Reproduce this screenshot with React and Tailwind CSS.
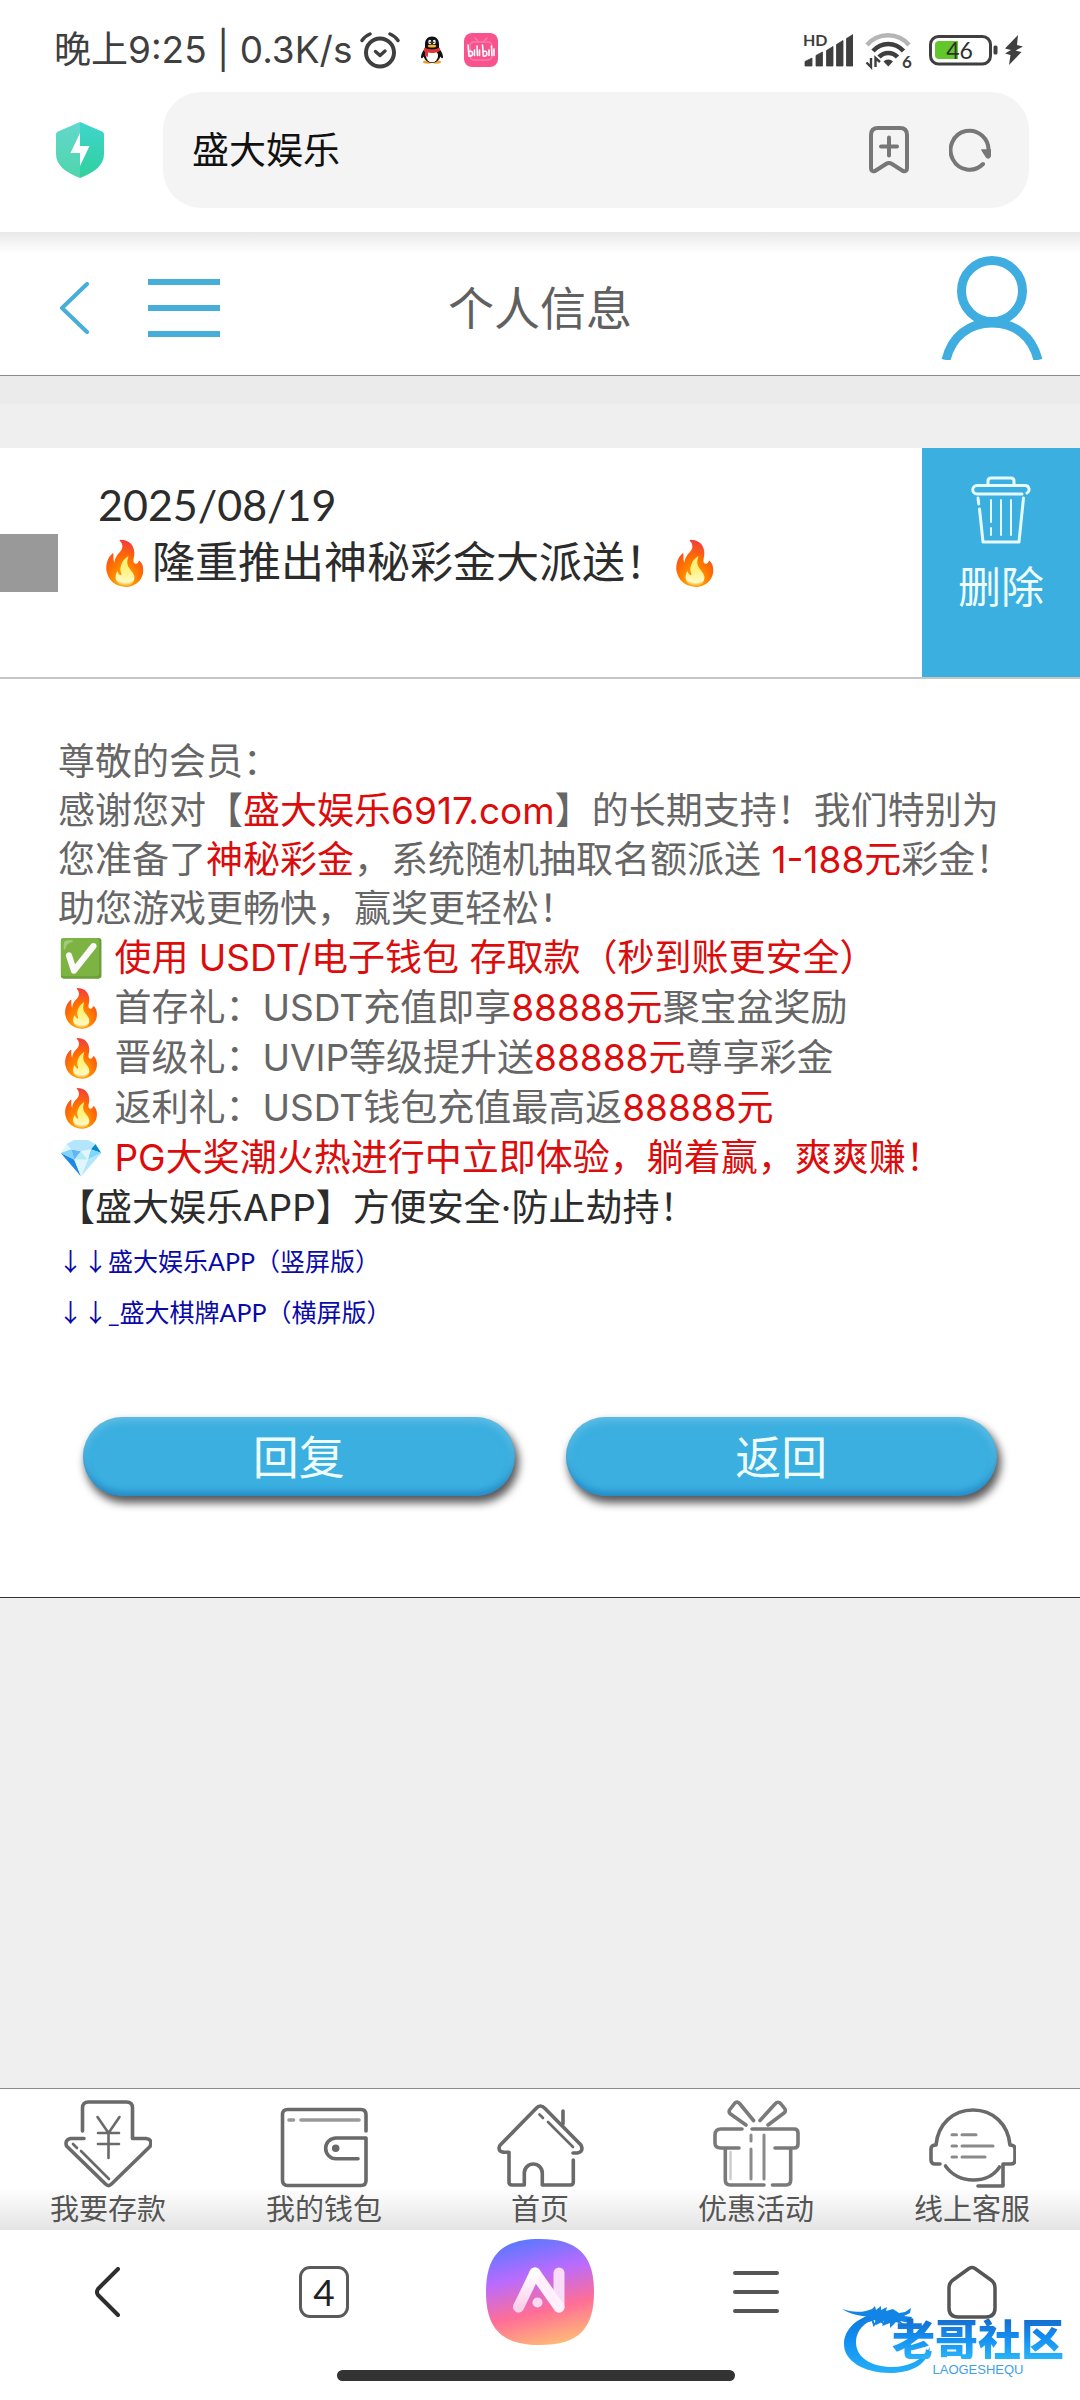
import React from "react";

const LATO = "font-['Lato','Noto_Sans_CJK_SC',sans-serif]";
const INTER = "font-['Inter','Noto_Sans_CJK_SC',sans-serif]";

function Red({ children }) {
  return <span className="text-[#dc0c0c]">{children}</span>;
}

function AlarmIcon() {
  return (
    <svg width="40" height="38" viewBox="0 0 40 38" fill="none" stroke="#3f3f3f" strokeLinecap="round" strokeLinejoin="round">
      <circle cx="20" cy="21.5" r="14" strokeWidth="4" />
      <path d="M15.5 20.5l4.5 4 5-4.5" strokeWidth="3.4" />
      <path d="M2 9.5c2-3 5-5.300 8-6.500M38 9.500c-2-3-5-5.300-8-6.500" strokeWidth="3.4" />
    </svg>
  );
}

function PenguinIcon() {
  return (
    <svg width="24" height="28" viewBox="0 0 24 28">
      <ellipse cx="7.500" cy="26" rx="4.500" ry="1.700" fill="#f0a030" />
      <ellipse cx="16.500" cy="26" rx="4.500" ry="1.700" fill="#f0a030" />
      <path d="M12 0.500c4.500 0 7 3.200 7 7.500v4c2 2.800 4 6 4 9 0 2-1.500 1.500-2.700-.500C19.500 24 16 27 12 27s-7.500-3-8.300-6.500C2.500 22.500 1 23 1 21c0-3 2-6.200 4-9V8c0-4.300 2.500-7.500 7-7.500z" fill="#111" />
      <ellipse cx="12" cy="20" rx="6" ry="6.300" fill="#fff" />
      <path d="M4.500 11.500c4 2.500 11 2.500 15 0l.8 3.200c-4 2.400-9 2.600-12.300 1.900v4.200l-3-.5v-4.500l-1.300-.9z" fill="#e03535" />
      <ellipse cx="9.800" cy="6" rx="1.500" ry="2.200" fill="#fff" />
      <ellipse cx="14.200" cy="6" rx="1.500" ry="2.200" fill="#fff" />
      <circle cx="10.200" cy="6.200" r="0.800" fill="#111" />
      <circle cx="13.800" cy="6.200" r="0.800" fill="#111" />
      <ellipse cx="12" cy="10" rx="4.200" ry="1.500" fill="#f2b233" />
    </svg>
  );
}

function BiliIcon() {
  return (
    <svg width="34" height="34" viewBox="0 0 34 34" fill="none" strokeLinecap="round">
      <rect width="34" height="34" rx="8" fill="#f9538d" />
      <rect x="6" y="9" width="22" height="18" rx="4" stroke="#fb7ba8" strokeWidth="1.500" />
      <path d="M11 5l4 4M23 5l-4 4" stroke="#fb7ba8" strokeWidth="1.500" />
      <g stroke="#fff" strokeWidth="1.600">
        <path d="M4 12l1 11c3 .5 4-1 3.500-3s-2-2-3.500-1.500M10.500 17v5.500M13 13l.5 9.500M15.500 17v5.500" />
        <path d="M18.500 12l.8 11c3 .5 4-1 3.500-3s-2-2-3.500-1.500M25 17v5.500M27.500 13l.4 9.500M30 16v6.500" />
      </g>
    </svg>
  );
}

function SignalIcon() {
  return (
    <svg width="50" height="42" viewBox="0 -4 50 42" fill="#3f3f3f">
      <text x="0" y="13" fontSize="16" fontWeight="700" fontFamily="Lato, sans-serif">HD</text>
      <path d="M2 28.500l7-3.500v8H2zM13 22.500l6.500-3.500v14H13zM23.500 17.500l6.500-4v19.500h-6.500zM33.500 11.500l6.500-4V33h-6.500zM43.500 5.500l6.500-4V33h-6.500z" stroke="#3f3f3f" strokeWidth="0.800" strokeLinejoin="round" />
    </svg>
  );
}

function WifiIcon() {
  return (
    <svg width="48" height="46" viewBox="0 -4 48 46" fill="none">
      <path d="M2 14C13 1 33 1 44 14" stroke="#b5b5b5" strokeWidth="4.500" />
      <path d="M8 20C16.500 10.500 30 10.500 38.500 20" stroke="#3f3f3f" strokeWidth="4.500" />
      <path d="M14 26C19 20.500 27.500 20.500 32.500 26" stroke="#3f3f3f" strokeWidth="4.500" />
      <path d="M18.500 30.500a6.500 6.500 0 0 1 9.500 0l-4.700 5z" fill="#3f3f3f" />
      <path d="M6 27v9l-4.500-4.500M10.500 36v-9l4.500 4" stroke="#3f3f3f" strokeWidth="2.400" />
      <text x="37" y="37" fontSize="17" fontWeight="700" fontFamily="Lato, sans-serif" fill="#3f3f3f">6</text>
    </svg>
  );
}

function BatteryIcon() {
  return (
    <svg width="94" height="32" viewBox="0 0 94 32">
      <rect x="1.500" y="2.500" width="60" height="27.500" rx="8" fill="none" stroke="#3f3f3f" strokeWidth="3" />
      <path d="M10 7h19v18H10a4 4 0 0 1-4-4V11a4 4 0 0 1 4-4z" fill="#62c72b" />
      <rect x="64.500" y="11.500" width="4" height="9" rx="1.500" fill="#3f3f3f" />
      <text x="30.500" y="24.500" fontSize="23" textAnchor="middle" fontFamily="Lato, sans-serif" fill="#2f2f2f">46</text>
      <path d="M89 1L76 14.500l6 1.500-6 3.500 5.500 1.500-1.500 10L92.500 18l-6-1.500 7.500-4-6-1.500z" fill="#3f3f3f" />
    </svg>
  );
}

function ShieldIcon() {
  return (
    <svg width="48" height="58" viewBox="0 0 48 58">
      <defs>
        <linearGradient id="shieldL" x1="0" y1="0" x2="0" y2="1">
          <stop offset="0" stopColor="#62d8cd" />
          <stop offset="1" stopColor="#4fd5ab" />
        </linearGradient>
        <linearGradient id="shieldR" x1="0" y1="0" x2="0" y2="1">
          <stop offset="0" stopColor="#40d5cd" />
          <stop offset="1" stopColor="#2fd09d" />
        </linearGradient>
      </defs>
      <path d="M24 1L2 10.500a3 3 0 0 0-2 2.500v20c0 11 9 18 24 24z" fill="url(#shieldL)" />
      <path d="M24 1l22 9.500a3 3 0 0 1 2 2.500v20c0 11-9 18-24 24z" fill="url(#shieldR)" />
      <path d="M24 12L14.500 32H24v13l9.500-20H24z" fill="#fff" />
    </svg>
  );
}

function BookmarkAddIcon() {
  return (
    <svg width="40" height="48" viewBox="0 0 40 48" fill="none" stroke="#777" strokeWidth="4" strokeLinecap="round" strokeLinejoin="round">
      <path d="M2 42V9q0-7 7-7h22q7 0 7 7v33q0 4-4 3l-11-7q-3-2-6 0L6 45q-4 1-4-3z" />
      <path d="M20 11.500v18M12 20.500h16" />
    </svg>
  );
}

function ReloadIcon() {
  return (
    <svg width="42" height="44" viewBox="0 0 42 44" fill="none">
      <path d="M34 36A19 19.500 0 1 1 39.500 24" stroke="#777" strokeWidth="4" strokeLinecap="round" />
      <path d="M33 22h8.500v5.500q-1.500 4-4 1.500z" fill="#777" stroke="#777" strokeWidth="1.500" strokeLinejoin="round" />
    </svg>
  );
}

function PersonIcon() {
  return (
    <svg width="102" height="104" viewBox="0 0 102 104" fill="none" stroke="#3faddf" strokeWidth="9">
      <ellipse cx="52" cy="35" rx="30.500" ry="30.500" />
      <path d="M6 104C12 80 29 67 52 67s40 13 46 37" />
    </svg>
  );
}

function TrashIcon() {
  return (
    <svg width="60" height="68" viewBox="0 0 60 68" fill="none" stroke="#e6faff" strokeWidth="3" strokeLinecap="round" strokeLinejoin="round">
      <path d="M17 9V5q0-3 3-3h20q3 0 3 3v4" />
      <path d="M51 18H6a4 4 0 0 1 0-8.500h48a4 4 0 0 1 2 7.500" />
      <path d="M7 22l.7 6M8.500 33L12 66h36l4.500-44" />
      <path d="M20 24v22M20 52v7M30 24v35M40 24v35" strokeWidth="2" />
    </svg>
  );
}

function NavSvg({ children }) {
  return (
    <svg width="88" height="88" viewBox="0 0 88 88" fill="none" stroke="#6a6a6a" strokeWidth="3.600" strokeLinecap="round" strokeLinejoin="round">
      {children}
    </svg>
  );
}

function DepositIcon() {
  return (
    <NavSvg>
      <path d="M18.500 31V8q0-6 6-6h38q6 0 6 6v30.500H82q7 1 4 8L47.500 84q-3 3-6 0L2.500 46q-2-6 4-7.500h13.500" />
      <path d="M33.500 17l11 16 11-16M44.500 33v25M34 33h21M34 44h21" strokeWidth="2.600" />
      <path d="M9 44l4 4M17 51l28 28" strokeWidth="2.600" />
    </NavSvg>
  );
}

function WalletIcon() {
  return (
    <NavSvg>
      <path d="M86 31V15q0-5.500-5-5.500H7.500q-5 0-5 5V80q0 5.500 5 5.500H81q5 0 5-5V38H56a10.300 10.300 0 0 0 0 20.700h22" />
      <circle cx="55.700" cy="48.300" r="2" fill="#6a6a6a" />
      <path d="M9 20h4.500M21 20h58" stroke="#999" />
    </NavSvg>
  );
}

function HouseIcon() {
  return (
    <NavSvg>
      <path d="M77.300 60v22q0 3-3 3h-28V73a9 9 0 0 0-18 0v12H16q-3 0-3-3V52.300H8q-7-1-4-7L40 8.500q4.300-5 9 0L85 45q3 7-4 8h-4" />
      <path d="M67 11v13" />
      <path d="M43.500 14.500l3.500 3.500M52 22l25 25" strokeWidth="2.600" />
    </NavSvg>
  );
}

function GiftIcon() {
  return (
    <NavSvg>
      <g stroke="#7a7a7a">
        <path d="M30 29H9q-6 0-6 6v8q0 5 6 5h18M40 29h42q4 0 4 4v11q0 4-4 4H63" />
        <path d="M13.300 49v31q0 5 5 5H52M60.500 85H74q4.700 0 4.700-5V49" />
        <path d="M41.500 20.500L28 4q-3-3.500-5.500-.500L17.500 10q-1 2.500 1 4L34 25M48 20.500L63 4q3-3.500 6 0l4 5q1 2.500-1 4L56 25" />
      </g>
      <path d="M39 35v6M39 49v30M52 35v44" stroke="#8a8a8a" strokeWidth="3" />
      <path d="M18.500 52v27" stroke="#ccc" strokeWidth="2.500" />
    </NavSvg>
  );
}

function ServiceIcon() {
  return (
    <NavSvg>
      <path d="M12 64H7q-4 0-4-4V49q0-4 5-4C10 24 25 10 45 10s35 14 37 35q5 0 5 4v11q0 4-4 4h-8v22H50" />
      <path d="M17.500 66C30 84 60 85 71.500 67" />
      <path d="M24 34.700h4.500M34 34.700h14M24 46h4.500M34 46h31M24 57h4.500M34 57h23" stroke="#8a8a8a" strokeWidth="3" />
    </NavSvg>
  );
}

function AiIcon() {
  return (
    <svg width="108" height="106" viewBox="0 0 108 106">
      <defs>
        <linearGradient id="aiBg" x1="0.350" y1="0" x2="0.600" y2="1">
          <stop offset="0" stopColor="#5b78ff" />
          <stop offset="0.330" stopColor="#b86bff" />
          <stop offset="0.680" stopColor="#ff6e96" />
          <stop offset="1" stopColor="#ffb878" />
        </linearGradient>
        <linearGradient id="aiLeg" x1="0" y1="0" x2="0" y2="1">
          <stop offset="0" stopColor="#fff" />
          <stop offset="1" stopColor="#fbd0ea" />
        </linearGradient>
      </defs>
      <path d="M54 0C92 0 108 16 108 53S92 106 54 106 0 90 0 53 16 0 54 0z" fill="url(#aiBg)" />
      <g fill="none" strokeWidth="11" strokeLinecap="round" strokeLinejoin="round">
        <path d="M73 34v34" stroke="#f8dcf8" />
        <path d="M49 34L73 68" stroke="#fff0fb" />
        <path d="M32.500 68L49 34" stroke="url(#aiLeg)" />
      </g>
      <circle cx="51.500" cy="63.500" r="5" fill="#fbd9f0" />
    </svg>
  );
}

function DragonLogo() {
  return (
    <svg width="90" height="72" viewBox="0 0 90 72">
      <defs>
        <linearGradient id="dragon" x1="0" y1="0" x2="0" y2="1">
          <stop offset="0" stopColor="#1178d8" />
          <stop offset="0.400" stopColor="#0f8cf0" />
          <stop offset="1" stopColor="#25b0f8" />
        </linearGradient>
      </defs>
      <path d="M32 10C14 14 2 26 2 40c0 17 20 29 46 29 22 0 38-9 40-26-8 14-22 20-38 20C30 63 14 54 14 38c0-11 8-20 22-25z" fill="url(#dragon)" />
      <path d="M0 5c7 2 14 4 24 2l6-2 3-3 1 4 5-4 0 4 6-3-1 4 7-2 6 4 6-1 6-4-1 5-6 3 8 1-2 6-10-2 4 4-8-3-6 6 0-5-8 3 2-5-8 4-1-5-6 2 1-5C17 12 8 10 0 5z" fill="#1284e6" />
      <path d="M26 12l-4 7 8-4 2 6 5-6 5 5 4-6" fill="none" stroke="#1284e6" strokeWidth="2" />
    </svg>
  );
}

function BrandMark() {
  return (
    <div className="pointer-events-none absolute right-4 bottom-6 flex items-end">
      <DragonLogo />
      <div className="-ml-10 flex flex-col items-center">
        <span className="bg-linear-to-b from-[#1668c8] via-[#148ef0] to-[#2ab4f8] bg-clip-text font-['Noto_Sans_CJK_SC',sans-serif] text-[43px] leading-[43px] font-black text-transparent">
          老哥社区
        </span>
        <span className="mt-1 font-['Liberation_Sans',sans-serif] text-[13px] leading-[13px] text-[#3f9fe8]">LAOGESHEQU</span>
      </div>
    </div>
  );
}

const navItems = [
  { label: "我要存款", Icon: DepositIcon },
  { label: "我的钱包", Icon: WalletIcon },
  { label: "首页", Icon: HouseIcon },
  { label: "优惠活动", Icon: GiftIcon },
  { label: "线上客服", Icon: ServiceIcon },
];

function PillButton({ children }) {
  return (
    <button
      type="button"
      className="h-[79px] flex-1 rounded-full bg-[#3aafe0] text-[46px] leading-[60px] text-[#f0fdff] shadow-[3px_6px_9px_1px_rgba(0,0,0,0.65),inset_0_-6px_6px_-2px_rgba(20,110,180,0.6),inset_0_4px_8px_rgba(140,205,235,0.5)]"
    >
      {children}
    </button>
  );
}

export default function App() {
  return (
    <div className={`flex min-h-screen w-full flex-col bg-[#efefef] ${LATO}`}>
      <div className="bg-white">
        <div className="flex h-[92px] items-center justify-between pt-2 pr-[57px] pl-[54px]">
          <div className="flex items-center">
            <span className={`${INTER} text-[37px] leading-[44px] text-[#3f3f3f]`}>
              晚上9:25 | 0.3K/s
            </span>
            <span className="ml-2 flex items-center gap-5">
              <AlarmIcon />
              <PenguinIcon />
              <BiliIcon />
            </span>
          </div>
          <div className="flex items-center">
            <SignalIcon />
            <span className="mr-4 ml-3"><WifiIcon /></span>
            <BatteryIcon />
          </div>
        </div>
        <div className="flex items-center pr-[51px] pb-6 pl-[56px]">
          <button type="button" aria-label="安全"><ShieldIcon /></button>
          <div className="ml-[59px] flex h-[116px] flex-1 items-center rounded-[38px] bg-[#f4f4f4] pr-[38px] pl-[29px]">
            <input
              type="text"
              aria-label="地址栏"
              defaultValue="盛大娱乐"
              className="min-w-0 flex-1 bg-transparent text-[37px] leading-[50px] text-[#111] outline-none"
            />
            <div className="flex items-center gap-10">
              <button type="button" aria-label="收藏"><BookmarkAddIcon /></button>
              <button type="button" aria-label="刷新"><ReloadIcon /></button>
            </div>
          </div>
        </div>
      </div>

      <header className="grid h-[144px] grid-cols-3 items-center border-b border-[#8a8a8a] bg-linear-to-b from-[#e9e9e9] to-white to-15% px-[38px] pt-2">
        <div className="flex items-center gap-[58px] pl-5">
          <button type="button" aria-label="返回上页">
            <svg width="32" height="52" viewBox="0 0 32 52" fill="none" stroke="#47add9" strokeWidth="4" strokeLinecap="round" strokeLinejoin="round">
              <path d="M29 2L4 26l25 24" />
            </svg>
          </button>
          <button type="button" aria-label="菜单">
            <svg width="72" height="60" viewBox="0 0 72 60" fill="#47add9">
              <path d="M0 1h72v6H0zM0 27h72v6H0zM0 53h72v6H0z" />
            </svg>
          </button>
        </div>
        <h1 className="text-center text-[46px] leading-[60px] text-[#606060]">个人信息</h1>
        <button type="button" aria-label="个人中心" className="justify-self-end"><PersonIcon /></button>
      </header>

      <div className="h-7 bg-[#ebebeb]" />
      <div className="h-11 bg-[#efefef]" />

      <section className="flex h-[231px] border-b-2 border-[#c6c6c6] bg-white">
        <input type="checkbox" aria-label="选择消息" className="mt-[86px] h-[58px] w-[58px] appearance-none bg-[#999]" />
        <div className="ml-10 flex-1 pt-7 text-[43px] leading-[57px] text-[#2c2c2c]">
          <p>2025/08/19</p>
          <p>🔥隆重推出神秘彩金大派送！🔥</p>
        </div>
        <button type="button" className="flex w-[158px] flex-col items-center bg-[#3aafe0] pt-7 text-[43px] leading-[57px] text-[#f0fdff]">
          <TrashIcon />
          <span className="mt-3.5">删除</span>
        </button>
      </section>

      <section className="border-b border-[#333] bg-white pt-[58px] pb-[101px]">
        <div className={`${INTER} px-[58px] text-[37px] whitespace-nowrap text-[#666]`}>
          <div className="leading-[49px]">
            <p>尊敬的会员：</p>
            <p>感谢您对【<Red>盛大娱乐6917.com</Red>】的长期支持！我们特别为</p>
            <p>您准备了<Red>神秘彩金</Red>，系统随机抽取名额派送 <Red>1-188元</Red>彩金！</p>
            <p>助您游戏更畅快，赢奖更轻松！</p>
          </div>
          <div className="leading-[50px]">
            <p>✅ <Red>使用 USDT/电子钱包 存取款（秒到账更安全）</Red></p>
            <p>🔥 首存礼：USDT充值即享<Red>88888元</Red>聚宝盆奖励</p>
            <p>🔥 晋级礼：UVIP等级提升送<Red>88888元</Red>尊享彩金</p>
            <p>🔥 返利礼：USDT钱包充值最高返<Red>88888元</Red></p>
            <p>💎 <Red>PG大奖潮火热进行中立即体验，躺着赢，爽爽赚！</Red></p>
            <p className="text-[#2c2c2c]">【盛大娱乐APP】方便安全·防止劫持！</p>
          </div>
          <div className={`${LATO} flex flex-col items-start pt-0.5 text-[25px] leading-[50px] text-[#0a0aa8]`}>
            <a href="#portrait"><span className="font-['Noto_Sans_CJK_SC',sans-serif]">↓↓</span>盛大娱乐APP（竖屏版）</a>
            <a href="#landscape"><span className="font-['Noto_Sans_CJK_SC',sans-serif]">↓↓</span>_盛大棋牌APP（横屏版）</a>
          </div>
        </div>
        <div className="mt-20 flex gap-[51px] px-[83px]">
          <PillButton>回复</PillButton>
          <PillButton>返回</PillButton>
        </div>
      </section>

      <main className="flex-1" />

      <nav className="grid grid-cols-5 border-t border-[#8a8a8a] bg-linear-to-b from-white from-70% to-[#e4e4e4] pt-[11px]">
        {navItems.map(({ label, Icon }) => (
          <a key={label} href="#nav" className="flex flex-col items-center text-[29px] leading-[42px] text-[#555]">
            <Icon />
            {label}
          </a>
        ))}
      </nav>

      <footer className="relative bg-white pb-[19px]">
        <div className="grid h-[124px] grid-cols-5 place-items-center">
          <button type="button" aria-label="后退">
            <svg width="26" height="50" viewBox="0 0 26 50" fill="none" stroke="#2e2e2e" strokeWidth="4" strokeLinecap="round" strokeLinejoin="round">
              <path d="M23 2L3 22q-2 3 0 6l20 20" />
            </svg>
          </button>
          <button type="button" aria-label="标签页" className="h-[52px] w-[50px] rounded-[11px] border-[3px] border-[#5a5a5a] text-[37px] leading-[46px] text-[#222]">
            4
          </button>
          <button type="button" aria-label="AI"><AiIcon /></button>
          <button type="button" aria-label="工具">
            <svg width="46" height="44" viewBox="0 0 46 44" stroke="#555" strokeWidth="4" strokeLinecap="round">
              <path d="M2 3h42M2 22h42M2 41h42" />
            </svg>
          </button>
          <button type="button" aria-label="主页">
            <svg width="50" height="54" viewBox="0 0 50 54" fill="none" stroke="#555" strokeWidth="3.500" strokeLinejoin="round">
              <path d="M2 23q0-5 4-8L22 3.500q3-2 6 0L44 15q4 3 4 8v20q0 9-9 9H11q-9 0-9-9z" />
            </svg>
          </button>
        </div>
        <div className="flex justify-center pt-4 pr-2">
          <div className="h-[11px] w-[398px] rounded-full bg-[#333]" />
        </div>
        <BrandMark />
      </footer>
    </div>
  );
}
